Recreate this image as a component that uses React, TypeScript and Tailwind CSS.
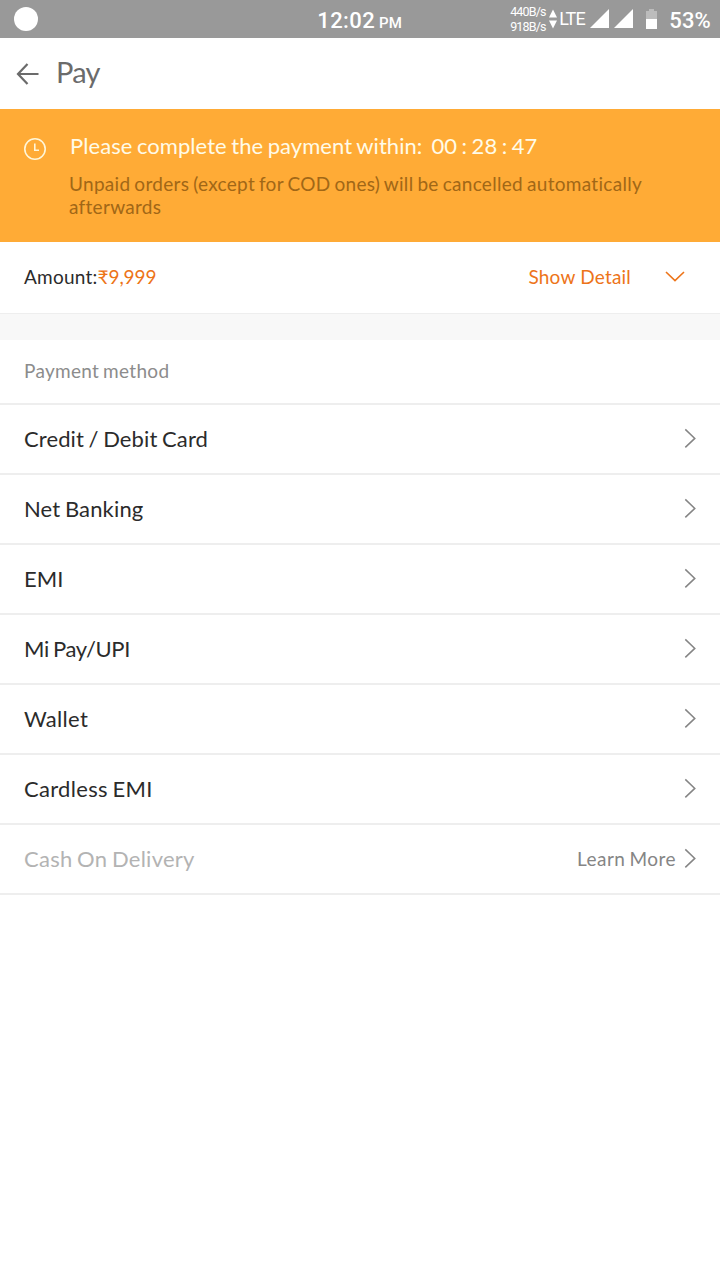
const methods = [
  { name: "Credit / Debit Card", tracking: "tracking-[0.12px]" },
  { name: "Net Banking", tracking: "tracking-[0.15px]" },
  { name: "EMI", tracking: "tracking-normal" },
  { name: "Mi Pay/UPI", tracking: "tracking-[-0.35px]" },
  { name: "Wallet", tracking: "tracking-[0.3px]" },
  { name: "Cardless EMI", tracking: "tracking-[0.3px]" },
];

function Chevron() {
  return (
    <svg className="-mt-0.5" width="12" height="20" viewBox="0 0 12 20" fill="none" stroke="#858585" strokeWidth="1.5">
      <path d="M1.3 1.4 10.8 10.4 1.3 19.4" />
    </svg>
  );
}

function StatusBar() {
  return (
    <header className="grid h-[38px] grid-cols-[1fr_auto_1fr] items-center bg-[#999999] font-['Roboto',sans-serif] text-white">
      <div className="ml-3.5 size-6 rounded-full bg-white" />
      <div className="flex items-baseline gap-1 pt-[3px] pr-px font-medium whitespace-nowrap">
        <span className="text-[22px] leading-none tracking-[0.4px]">12:02</span>
        <span className="text-[15px] leading-none">PM</span>
      </div>
      <div className="flex items-center justify-end pr-[9px] whitespace-nowrap">
        <div className="flex w-9 flex-col text-[12.5px] leading-[15px] tracking-[-0.85px]">
          <span>440B/s</span>
          <span>918B/s</span>
        </div>
        <svg className="ml-[3px]" width="8" height="20" viewBox="0 0 8 20" fill="currentColor">
          <path d="M4 .5 8 8.5H0zM0 11.5h8l-4 8z" />
        </svg>
        <span className="ml-0.5 w-[27px] text-[18px] leading-5 tracking-[-0.9px]">LTE</span>
        <svg className="ml-1" width="44" height="20" viewBox="0 0 44 20" fill="currentColor">
          <path d="M19 0v19H0zM43 0v19H24z" />
        </svg>
        <svg className="ml-3" width="12" height="20" viewBox="0 0 12 20" fill="currentColor">
          <path d="M3 0h5v2h3v8H0V2h3z" opacity=".35" />
          <path d="M0 10h11v10H0z" />
        </svg>
        <span className="ml-[11px] pt-[3px] text-[22px] leading-6 font-medium tracking-[0.2px]">53%</span>
      </div>
    </header>
  );
}

export default function App() {
  return (
    <div className="min-h-screen bg-white font-['Lato',sans-serif] text-[#2b2b2b]">
      <StatusBar />

      <div className="flex h-[71px] items-center pl-4 text-[#6b6b6b]">
        <svg width="24" height="24" viewBox="0 0 24 24" fill="none" stroke="currentColor" strokeWidth="2.2">
          <path d="M11.5 2 2 12l9.5 10M2 12H22.5" />
        </svg>
        <h1 className="ml-4 pb-[3px] text-[29px] leading-9 tracking-[-0.7px]">Pay</h1>
      </div>

      <section className="flex h-[133px] bg-[#ffab36] pt-[23px] pl-6">
        <svg className="mt-1.5 shrink-0" width="22" height="22" viewBox="0 0 22 22" fill="none" stroke="#fff6d8" strokeWidth="1.6">
          <circle cx="11" cy="11" r="10.2" />
          <path d="M10.8 5.5v6.7H15" />
        </svg>
        <div className="ml-[23px]">
          <p className="pl-px text-[22px] leading-[27px] tracking-[0.06px] text-[#fffbe8] [word-spacing:-1.2px]">
            Please complete the payment within:
            <span className="ml-[9px]">00 : 28 : 47</span>
          </p>
          <p className="mt-[13px] w-[600px] text-[19px] leading-[23px] tracking-[0.3px] text-[#a16716] [word-spacing:-1.2px]">
            Unpaid orders (except for COD ones) will be cancelled automatically afterwards
          </p>
        </div>
      </section>

      <section className="flex h-[72px] items-center border-b border-[#eeeeee] pr-[35px] pl-6 text-[19px] [word-spacing:-1.2px]">
        <p className="tracking-[0.25px]">
          Amount:<span className="tracking-[-0.1px] text-[#ed7419]">₹9,999</span>
        </p>
        <button className="ml-auto flex items-center tracking-[0.2px] text-[#ed7419]">
          Show Detail
          <svg className="-mt-0.5 ml-[34px]" width="20" height="12" viewBox="0 0 20 12" fill="none" stroke="currentColor" strokeWidth="1.6">
            <path d="M1 1 10 9.6 19 1" />
          </svg>
        </button>
      </section>

      <div className="h-[26px] bg-[#f8f8f8]" />

      <h2 className="flex h-[65px] items-center border-b-2 border-[#eeeeee] pl-6 text-[19px] tracking-[0.3px] text-[#8c8c8c] [word-spacing:-1.2px]">
        Payment method
      </h2>
      <ul className="text-[22px] [word-spacing:-1.2px]">
        {methods.map(({ name, tracking }) => (
          <li key={name} className="flex h-[70px] items-center justify-between border-b-2 border-[#eeeeee] pr-6 pl-6">
            <span className={`pb-0.5 ${tracking}`}>{name}</span>
            <Chevron />
          </li>
        ))}
        <li className="flex h-[70px] items-center border-b-2 border-[#eeeeee] pr-6 pl-6 text-[#b3b3b3]">
          <span className="pb-0.5 tracking-[0.25px]">Cash On Delivery</span>
          <span className="mr-2 ml-auto text-[19px] tracking-[0.45px] text-[#858585]">Learn More</span>
          <Chevron />
        </li>
      </ul>
    </div>
  );
}
